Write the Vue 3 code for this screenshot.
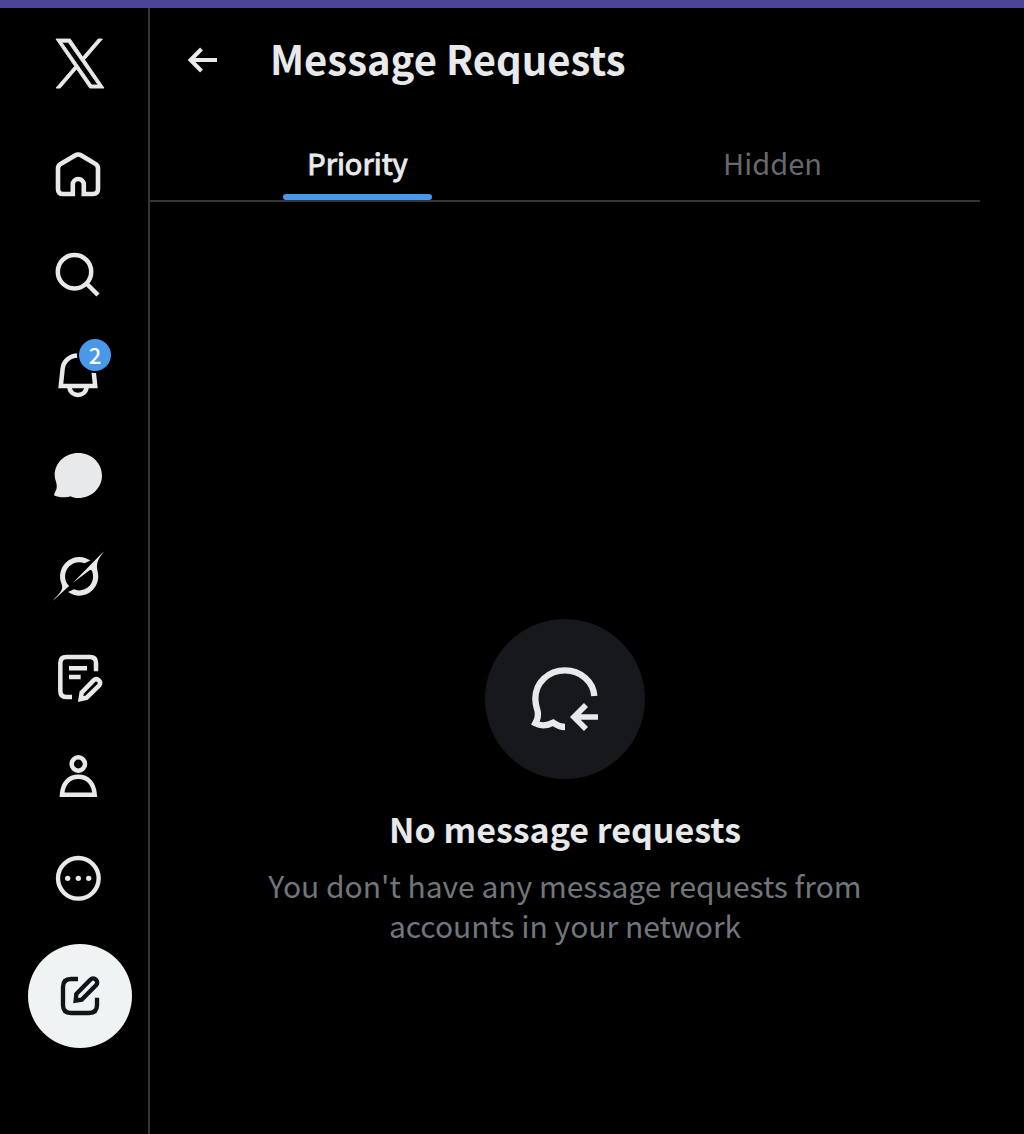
<template>
  <div class="page">
    <div class="top-strip"></div>
    <div class="layout">
      <header class="sidebar">
        <a class="logo" href="#" aria-label="X">
          <svg class="icon" viewBox="-100 -75 1400 1400">
            <path stroke="currentColor" stroke-width="22" d="M714.163 519.284L1160.89 0H1055.03L667.137 450.887L357.328 0H0L468.492 681.821L0 1226.37H105.866L515.491 750.218L842.672 1226.37H1200L714.137 519.284ZM569.165 687.828L521.697 619.934L144.011 79.694H306.615L611.412 515.685L658.88 583.579L1055.08 1150.3H892.476L569.165 687.854Z" />
          </svg>
        </a>

        <nav class="nav">
          <a v-for="item in navItems" :key="item.label" class="nav-item" href="#" :aria-label="item.label">
            <svg class="icon" :viewBox="item.viewBox">
              <path v-for="d in item.fills" :key="d" :d="d" />
              <path v-for="d in item.strokes" :key="d" class="line" :d="d" :stroke-width="item.weight" />
            </svg>
            <span v-if="item.count" class="badge">{{ item.count }}</span>
          </a>
        </nav>

        <button class="compose" type="button" aria-label="Post">
          <svg class="icon" viewBox="126 414 168 168">
            <path class="line" stroke-width="13" d="M204 447H183Q159 447 159 471V525Q159 549 183 549H237Q261 549 261 525V503" />
            <path class="line" stroke-width="13" d="M197 512L199 492L241 449A11.500 11.500 0 0 1 258 466L215 509Z" />
          </svg>
        </button>
      </header>

      <main class="main">
        <div class="title-bar">
          <button class="back" type="button" aria-label="Back">
            <svg viewBox="0 0 32 32">
              <path class="line" stroke-width="4" d="M31 16H5M15.500 5L4.500 16L15.500 27" />
            </svg>
          </button>
          <h1>Message Requests</h1>
        </div>

        <div class="tabs" role="tablist">
          <button
            v-for="tab in tabs"
            :key="tab"
            class="tab"
            :class="{ active: tab === activeTab }"
            type="button"
            role="tab"
            :aria-selected="tab === activeTab"
            @click="activeTab = tab"
          >
            <span class="tab-label">{{ tab }}</span>
          </button>
        </div>

        <section class="empty">
          <div class="empty-icon">
            <svg viewBox="177 189 216 216">
              <path class="line" stroke-width="19" d="M373 288C370 245 332 211 285 211C235 211 196 248 196 296C196 315 200 322 203 334C206 348 203 357 196 370C212 379 230 378 250 368C262 377 272 381 285 381" />
              <path class="line" stroke-width="17" d="M384 351H316M348 315L312 351L348 387" />
            </svg>
          </div>
          <h2>No message requests</h2>
          <p>You don't have any message requests from accounts in your network</p>
        </section>
      </main>
    </div>
  </div>
</template>

<script setup>
import { ref } from 'vue'

const tabs = ['Priority', 'Hidden']
const activeTab = ref('Priority')

const navItems = [
  {
    label: 'Home',
    viewBox: '0 0 56 56',
    weight: 4.6,
    strokes: [
      'M20.800 46H11Q6 46 6 41V20.500Q6 17.500 8.600 15.900L23 7.500Q26.200 5.500 29.400 7.500L43.400 15.900Q46 17.500 46 20.500V41Q46 46 41 46H31.800V36.500A5.500 5.500 0 0 0 20.800 36.500Z'
    ]
  },
  {
    label: 'Explore',
    viewBox: '0 0 56 56',
    weight: 4.5,
    strokes: ['M39.200 23.700A16.700 16.700 0 1 1 5.800 23.700A16.700 16.700 0 1 1 39.200 23.700ZM34 35L46 47']
  },
  {
    label: 'Notifications',
    viewBox: '0 0 56 56',
    weight: 4.5,
    count: 2,
    strokes: [
      'M8.800 38L10.600 21C11.300 13 18 7.500 26 7.500C34 7.500 40.700 13 41.400 21L43.200 38Z',
      'M17.400 39C18 44.500 22 47 26 47S34 44.500 34.600 39'
    ]
  },
  {
    label: 'Chat',
    viewBox: '0 0 56 56',
    fills: [
      'M26.300 5C39.500 5 50 15 50 27.500S39.500 50 26.300 50C23 50 20.500 49.300 18.500 48.200C15 49.500 7 50 2 47.200C1.900 46.300 3.200 44 4.300 41.500C5.100 39 4.800 36 3.800 33C3 31 2.700 29 2.700 27C2.700 15 13 5 26.300 5Z'
    ]
  },
  {
    label: 'Grok',
    viewBox: '-0.6 -2.1 36.2 36.2',
    fills: [
      'M12.745 20.540l10.970-8.190c.539-.4 1.307-.244 1.564.380 1.349 3.288.746 7.241-1.938 9.955-2.683 2.714-6.417 3.310-9.830 1.954l-3.728 1.745c5.347 3.697 11.840 2.782 15.898-1.324 3.219-3.255 4.216-7.692 3.284-11.693l.008.009c-1.351-5.878.332-8.227 3.782-13.031L33 0l-4.540 4.590v-.014L12.743 20.544',
      'M10.480 22.531c-3.837-3.707-3.175-9.446.1-12.755 2.420-2.449 6.388-3.448 9.852-1.979l3.720-1.737c-.670-.490-1.530-1.017-2.515-1.387-4.455-1.854-9.789-.931-13.410 2.728-3.483 3.523-4.579 8.940-2.697 13.561 1.405 3.454-.899 5.898-3.220 8.364C1.490 30.200.666 31.074 0 32l10.478-9.466'
    ]
  },
  {
    label: 'Articles',
    viewBox: '96 54 168 168',
    weight: 13.5,
    strokes: [
      'M156 201H139Q121 201 121 183V99Q121 81 139 81H210Q228 81 228 99V124',
      'M147 115H201M147 141H182',
      'M182 207L185 188L222 150A11.500 11.500 0 0 1 238 166L200 203Z'
    ]
  },
  {
    label: 'Profile',
    viewBox: '96 354 168 168',
    weight: 13.5,
    strokes: [
      'M195 402A20 20 0 1 1 155 402A20 20 0 1 1 195 402Z',
      'M126 494C128 460 147 440 175 440S222 460 224 494Z'
    ]
  },
  {
    label: 'More',
    viewBox: '126 54 168 168',
    weight: 13,
    strokes: ['M266 145A61 61 0 1 1 144 145A61 61 0 1 1 266 145Z'],
    fills: [
      'M181 145a8 8 0 1 1-16 0a8 8 0 1 1 16 0Z',
      'M213 145a8 8 0 1 1-16 0a8 8 0 1 1 16 0Z',
      'M244 145a8 8 0 1 1-16 0a8 8 0 1 1 16 0Z'
    ]
  }
]
</script>

<style>
body {
  margin: 0;
  background: #000;
}
</style>

<style scoped>
.page {
  display: flex;
  flex-direction: column;
  min-height: 100vh;
  background: #000;
  color: #e7e9ea;
  font-family: "Noto Sans CJK SC", "Noto Sans", sans-serif;
}

.top-strip {
  height: 8px;
  background: #4c4595;
}

.layout {
  display: flex;
  flex: 1;
}

.sidebar {
  display: flex;
  flex-direction: column;
  align-items: center;
  flex-shrink: 0;
  box-sizing: border-box;
  width: 150px;
  padding: 28px 16px 28px 28px;
  border-right: 2px solid #333639;
}

.icon {
  display: block;
  width: 56px;
  height: 56px;
  fill: currentColor;
}

.line {
  fill: none;
  stroke: currentColor;
}

.logo,
.nav-item {
  color: #e7e9ea;
}

.nav {
  display: flex;
  flex-direction: column;
  gap: 44px;
  padding: 56px 0 40px;
}

.nav-item {
  position: relative;
}

.badge {
  position: absolute;
  top: -11px;
  right: -5px;
  width: 32px;
  height: 32px;
  border: 2px solid #000;
  border-radius: 50%;
  background: #4a99e9;
  color: #fff;
  font-size: 22px;
  font-weight: 500;
  line-height: 30px;
  text-align: center;
}

.compose {
  display: flex;
  align-items: center;
  justify-content: center;
  width: 104px;
  height: 104px;
  padding: 0;
  border: 0;
  border-radius: 50%;
  background: #eff3f4;
  color: #0f1419;
  cursor: pointer;
}

.main {
  flex: 1;
  margin-right: 44px;
}

.title-bar {
  display: flex;
  align-items: center;
  gap: 52px;
  height: 104px;
  padding-left: 36px;
}

.back {
  width: 32px;
  height: 32px;
  padding: 0;
  border: 0;
  background: none;
  color: #e7e9ea;
  cursor: pointer;
}

.back svg {
  display: block;
}

h1 {
  margin: 0 0 4px;
  font-size: 40px;
  font-weight: 700;
  line-height: 48px;
}

.tabs {
  display: flex;
  height: 88px;
  border-bottom: 2px solid #333639;
}

.tab {
  display: flex;
  flex: 1;
  justify-content: center;
  padding: 0;
  border: 0;
  background: none;
  color: #66696d;
  font-family: inherit;
  font-size: 29px;
  line-height: 40px;
  cursor: pointer;
}

.tab-label {
  display: flex;
  flex-direction: column;
  justify-content: space-between;
  box-sizing: border-box;
  height: 100%;
  padding: 30px 0 0;
}

.tab-label::after {
  content: "";
  height: 6px;
  margin: 0 -24px;
  border-radius: 3px;
}

.tab.active {
  color: #e7e9ea;
  -webkit-text-stroke: 1px currentColor;
}

.tab.active .tab-label::after {
  background: #4a99e9;
}

.empty {
  display: flex;
  flex-direction: column;
  align-items: center;
  padding: 417px 100px 40px;
  text-align: center;
}

.empty-icon {
  display: flex;
  align-items: center;
  justify-content: center;
  width: 160px;
  height: 160px;
  border-radius: 50%;
  background: #16181c;
}

.empty-icon svg {
  width: 72px;
  height: 72px;
}

h2 {
  margin: 30px 0 16px;
  font-size: 34px;
  font-weight: 700;
  line-height: 40px;
}

p {
  max-width: 600px;
  margin: 0;
  color: #71767b;
  font-size: 30px;
  line-height: 40px;
}
</style>
